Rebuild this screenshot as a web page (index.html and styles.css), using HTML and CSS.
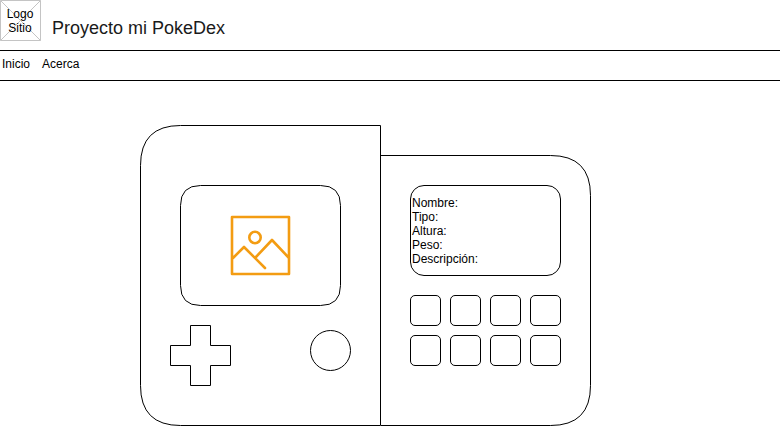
FILE: index.html
```html
<!DOCTYPE html>
<html lang="es">
<head>
<meta charset="utf-8">
<title>Proyecto mi PokeDex</title>
<link rel="stylesheet" href="styles.css">
</head>
<body>
<header class="header">
  <div class="logo">
    <svg class="outline" width="41" height="41"><path class="logo-lines" d="M.5 .5H40.5V40.5H.5ZL40.5 40.5M40.5 .5L.5 40.5"/></svg>
    <span class="logo-text">Logo<br>Sitio</span>
  </div>
  <h1 class="title">Proyecto mi PokeDex</h1>
</header>
<nav class="nav"><a>Inicio</a><a>Acerca</a></nav>
<main class="device">
  <section class="half left">
    <svg class="outline" width="241" height="301"><path d="M240.5 300.5V.5H40.5Q.5 .5 .5 40.5V260.5Q.5 300.5 40.5 300.5H240.5"/></svg>
    <div class="screen">
      <svg class="outline" width="161" height="121"><path d="M20.5 .5H140.5Q160.5 .5 160.5 20.5V100.5Q160.5 120.5 140.5 120.5H20.5Q.5 120.5 .5 100.5V20.5Q.5 .5 20.5 .5Z"/></svg>
      <svg class="picture" width="61" height="61" viewBox="-.5 -.5 61 61">
        <path d="M1.5 1.5H58.5V58.5H1.5ZM1.5 43.5L13.5 31.5L34.5 52.5M24.5 42.5L41.5 24.5L58.5 42.5"/>
        <circle cx="24.5" cy="22" r="5.7"/>
      </svg>
    </div>
    <div class="controls">
      <svg class="cross" width="61" height="61"><path d="M20.5 .5H40.5V20.5H60.5V40.5H40.5V60.5H20.5V40.5H.5V20.5H20.5Z"/></svg>
      <svg class="knob" width="41" height="41"><circle cx="20.5" cy="20.5" r="20"/></svg>
    </div>
  </section>
  <section class="half right">
    <svg class="outline" width="210" height="271"><path d="M0 .5H169.5Q209.5 .5 209.5 40.5V230.5Q209.5 270.5 169.5 270.5H0"/></svg>
    <div class="info">
      <p class="info-text">Nombre:<br>Tipo:<br>Altura:<br>Peso:<br>Descripción:</p>
    </div>
    <div class="keys"><i></i><i></i><i></i><i></i><i></i><i></i><i></i><i></i></div>
  </section>
</main>
</body>
</html>
```
FILE: styles.css
```css
* { box-sizing: border-box; }
body {
  margin: 0;
  background: #fff;
  color: #000;
  font: 12px/14px "Liberation Sans", Arial, sans-serif;
  overflow: hidden;
}
svg { display: block; fill: none; stroke: #000; stroke-width: 1; }
.outline { position: absolute; left: 0; top: 0; }

.header { display: flex; height: 50px; }
.logo { position: relative; width: 41px; height: 41px; padding: 7px 1px 0 0; text-align: center; }
.logo-lines { stroke: #c4c4c4; }
.logo-text { position: relative; display: block; }
.title { margin: 17px 0 0 11px; font-size: 18px; line-height: 22px; font-weight: normal; color: #1a1a1a; }

.nav {
  display: flex;
  gap: 12px;
  width: 780px;
  height: 31px;
  padding: 6px 2px 0;
  border-top: 1px solid #000;
  border-bottom: 1px solid #000;
}

.device { display: flex; align-items: flex-end; margin: 44px 0 0 140px; }
.half { position: relative; }
.left { width: 241px; height: 301px; padding: 60px 30px 0; }
.right { width: 210px; height: 271px; padding: 30px 0 0 29px; }

.screen { position: relative; width: 161px; height: 121px; margin-left: 10px; padding: 30px 0 0 50px; }
.picture { stroke: #f39c12; stroke-width: 2.6; stroke-linecap: round; stroke-linejoin: round; }
.controls { display: flex; gap: 79px; margin-top: 19px; }
.knob { margin-top: 5px; }

.info { width: 151px; height: 91px; padding: 10px 1px 0; border: 1px solid #000; border-radius: 14px; }
.info-text { margin: 0; }
.keys {
  display: grid;
  grid-template-columns: repeat(4, 31px);
  grid-auto-rows: 31px;
  gap: 9px;
  margin-top: 19px;
}
.keys i { border: 1px solid #000; border-radius: 5px; }
```
